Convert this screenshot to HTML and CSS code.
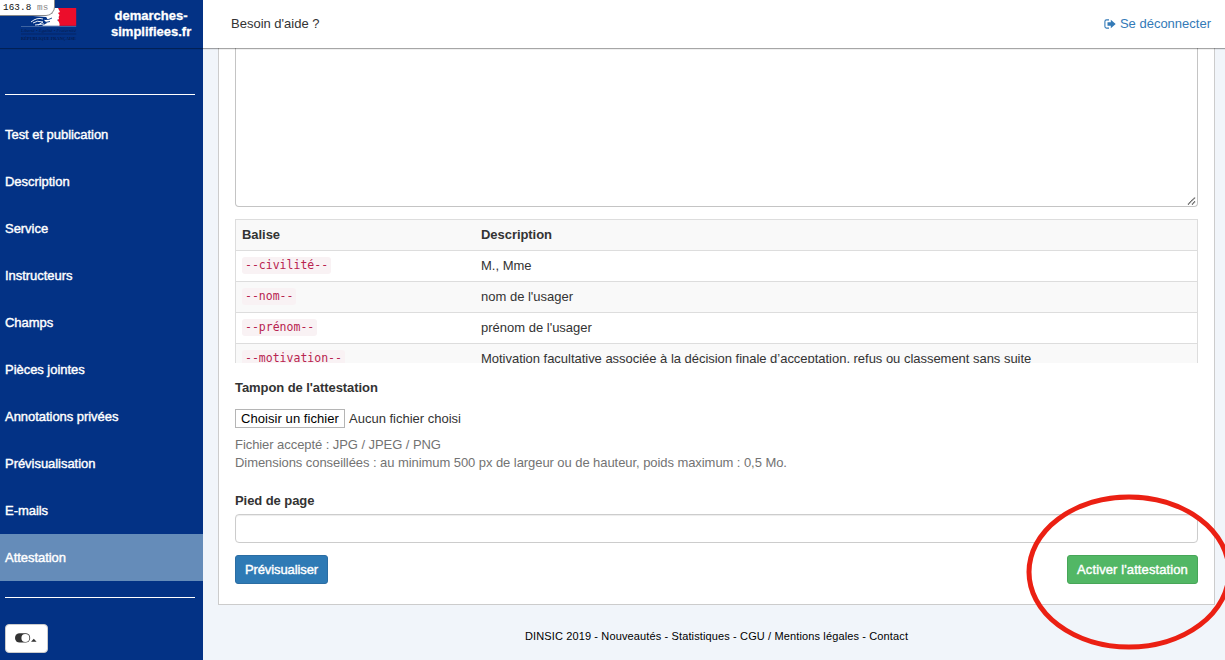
FILE: index.html
```html
<!DOCTYPE html>
<html lang="fr">
<head>
<meta charset="utf-8">
<title>demarches-simplifiees.fr</title>
<link rel="stylesheet" href="styles.css">
</head>
<body>
<div class="app">
  <header class="topbar">
    <div class="brand">
      <svg class="marianne" width="57" height="34" viewBox="0 0 57 34">
        <path fill="#ec0d2b" d="M37 0H55.200V17.800H37z"/>
        <path fill="#fff" d="M12 0H37L39 4L37 5L38.500 7Q37 9 38 11L36 12Q39 14 38.500 17.800H21L26 15L23 12Q28 11 25 9L12 8z"/>
        <path fill="none" stroke="#e8eef7" stroke-width="1" d="M10 14Q16 9 22 11M12 15Q16 12 22 14L17 17M14 17L23 16"/>
        <path fill="none" stroke="#033285" stroke-width=".9" d="M24 11.500Q28 12 31 10M24 14.500L29 13.500"/>
        <path fill="none" stroke="#4c70a8" stroke-width=".8" d="M0 18.500H55.200"/>
        <text x="0" y="24.300" class="motto" textLength="55" lengthAdjust="spacingAndGlyphs">Liberté • Égalité • Fraternité</text>
        <path stroke="#061c50" stroke-width=".6" d="M0 26H55.200"/>
        <text x="0" y="31.500" class="republic" textLength="55" lengthAdjust="spacingAndGlyphs">RÉPUBLIQUE FRANÇAISE</text>
      </svg>
      <div class="brand-name">demarches-<br>simplifiees.fr</div>
    </div>
    <div class="profiler"><b>163.8</b> <span>ms</span></div>
    <nav class="topnav">
      <a class="help"><span>Besoin d'aide ?</span></a>
      <a class="logout">
        <svg width="12" height="10" viewBox="0 0 12 10"><path fill="none" stroke="#337ab7" stroke-width="1.100" d="M5 .9H2.500Q.9.900.9 2.500V7.500Q.9 9.100 2.500 9.100H5"/><path fill="#337ab7" d="M3.500 3.200H6.800V.8L11.700 5L6.800 9.200V6.800H3.500z"/></svg>
        <span>Se déconnecter</span>
      </a>
    </nav>
  </header>
  <aside class="sidebar">
    <div class="rule"></div>
    <ul class="menu">
      <li><span>Test et publication</span></li>
      <li><span>Description</span></li>
      <li><span>Service</span></li>
      <li><span>Instructeurs</span></li>
      <li><span>Champs</span></li>
      <li><span>Pièces jointes</span></li>
      <li><span>Annotations privées</span></li>
      <li><span>Prévisualisation</span></li>
      <li><span>E-mails</span></li>
      <li class="active"><span>Attestation</span></li>
    </ul>
    <div class="rule"></div>
    <button class="toggle">
      <svg width="22" height="10" viewBox="0 0 22 10"><rect y=".2" width="15.200" height="9.400" rx="4.700" fill="#333"/><circle cx="10.400" cy="4.900" r="4" fill="#fff"/><path fill="#333" d="M16 8.800L18.800 5.800L21.600 8.800z"/></svg>
    </button>
  </aside>
  <main class="main">
    <section class="panel">
      <div class="editor">
        <svg width="10" height="10" viewBox="0 0 10 10"><path fill="none" stroke="#444" stroke-width="1.200" stroke-dasharray="1.200 .4" d="M1 8.500L8 1.500M5 8.500L8 5.500"/></svg>
      </div>
      <div class="tags">
        <table>
          <tr><th>Balise</th><th>Description</th></tr>
          <tr><td><code>--civilité--</code></td><td>M., Mme</td></tr>
          <tr><td><code>--nom--</code></td><td>nom de l'usager</td></tr>
          <tr><td><code>--prénom--</code></td><td>prénom de l'usager</td></tr>
          <tr><td><code>--motivation--</code></td><td class="long">Motivation facultative associée à la décision finale d’acceptation, refus ou classement sans suite</td></tr>
        </table>
      </div>
      <h4 class="label stamp">Tampon de l'attestation</h4>
      <div class="file"><button>Choisir un fichier</button><span>Aucun fichier choisi</span></div>
      <p class="hint">Fichier accepté : JPG / JPEG / PNG<br><span>Dimensions conseillées : au minimum 500 px de largeur ou de hauteur, poids maximum : 0,5 Mo.</span></p>
      <h4 class="label foot">Pied de page</h4>
      <input class="field" type="text">
      <div class="actions">
        <button class="btn primary">Prévisualiser</button>
        <button class="btn success">Activer l'attestation</button>
      </div>
    </section>
    <footer class="footer"><span>DINSIC 2019 - Nouveautés - Statistiques - CGU / Mentions légales - Contact</span></footer>
  </main>
  <svg class="highlight" width="205" height="160" viewBox="0 0 205 160"><ellipse cx="104" cy="80" rx="100" ry="75" fill="none" stroke="#eb2013" stroke-width="5"/></svg>
</div>
</body>
</html>
```

FILE: styles.css
```css
* { box-sizing: border-box; }
body {
  margin: 0;
  font: 13px/18px "Liberation Sans", Arial, sans-serif;
  color: #333;
}
.app {
  position: relative;
  display: grid;
  grid-template: 48px 612px / 203px 1fr;
  width: 1225px;
  height: 660px;
  overflow: hidden;
  background: #f1f5fa;
}
.topbar {
  grid-column: 1 / -1;
  position: relative;
  z-index: 2;
  display: flex;
  background: #fff;
  box-shadow: 0 1px 1px rgba(0, 0, 0, .35);
}
.brand {
  display: flex;
  width: 203px;
  padding: 8px 12px 0 21px;
  justify-content: space-between;
  background: #033285;
}
.marianne { flex: none; overflow: visible; }
.motto { font: italic 5px "Liberation Serif", serif; fill: #061c50; }
.republic { font: bold 5px "Liberation Serif", serif; fill: #061c50; }
.brand-name {
  width: 80px;
  color: #fff;
  font-weight: bold;
  font-size: 13px;
  line-height: 16px;
  text-align: center;
  white-space: nowrap;
  -webkit-text-stroke: .3px #fff;
}
.profiler {
  position: absolute;
  left: 0;
  top: 0;
  width: 55px;
  height: 16px;
  padding-left: 3px;
  border: solid #888;
  border-width: 0 1px 1px 0;
  border-radius: 0 0 9px 0;
  background: #fff;
  font: 9.300px/15px "Liberation Mono", monospace;
  letter-spacing: .1px;
  color: #888;
  white-space: nowrap;
}
.profiler b { font-weight: normal; color: #111; }
.topnav {
  flex: 1;
  display: flex;
  align-items: center;
  justify-content: space-between;
  padding: 0 14px 0 28px;
}
.logout { display: flex; align-items: center; gap: 4px; color: #337ab7; }
.logout svg { margin-top: -1px; }
.sidebar { padding-top: 46px; background: #033285; }
.rule { height: 1px; margin: 0 8px 0 5px; background: #fff; }
.menu { list-style: none; margin: 16px 0; padding: 0; }
.menu li {
  height: 47px;
  padding-left: 5px;
  line-height: 47px;
  letter-spacing: -.04px;
  color: #fff;
  -webkit-text-stroke: .4px #fff;
}
.menu .active { background: #658cb9; }
.toggle {
  display: flex;
  align-items: center;
  width: 43px;
  height: 29px;
  margin: 26px 0 0 5px;
  padding: 0 0 2px 9px;
  border: 1px solid #ccc;
  border-radius: 4px;
  background: #fff;
}
.main { padding: 0 10px 0 15px; }
.panel {
  height: 557px;
  padding: 0 16px;
  border: solid #ccc;
  border-width: 0 1px 1px;
  background: #fff;
}
.editor {
  display: flex;
  align-items: flex-end;
  justify-content: flex-end;
  height: 159px;
  border: solid #c4c4c4;
  border-width: 0 1px 1px;
  border-radius: 0 0 4px 4px;
}
.tags { height: 144px; margin-top: 12px; overflow: hidden; }
table { width: 100%; border-spacing: 0; border: 1px solid #ddd; }
tr { height: 31px; }
tr:nth-child(odd) { background: #f9f9f9; }
th, td { padding: 0 6px; border-bottom: 1px solid #ddd; text-align: left; }
th:first-child, td:first-child { width: 239px; }
th { letter-spacing: -.05px; }
.long { letter-spacing: -.026px; }
code {
  display: block;
  width: max-content;
  height: 17px;
  margin-top: -1px;
  padding: 0 3px;
  border-radius: 3px;
  background: #f9f2f4;
  color: #b8234f;
  font: 11.500px/16px "DejaVu Sans Mono", monospace;
}
.label { margin: 0; font-size: 13px; letter-spacing: -.07px; }
.stamp { margin-top: 16px; }
.file { display: flex; align-items: center; gap: 4px; height: 19px; margin-top: 12px; }
.file button {
  width: 110px;
  height: 19px;
  padding: 0;
  border: 1px solid #b5b5b5;
  background: #fff;
  font: 13px/16px "Liberation Sans", Arial, sans-serif;
  letter-spacing: .06px;
  color: #000;
}
.hint { margin: 8px 0 0; color: #737373; letter-spacing: -.065px; }
.foot { margin-top: 20px; }
.field {
  display: block;
  width: 100%;
  height: 29px;
  margin-top: 4px;
  border: 1px solid #ccc;
  border-radius: 4px;
  box-shadow: inset 0 1px 1px rgba(0, 0, 0, .075);
}
.actions { display: flex; justify-content: space-between; margin-top: 12px; }
.btn {
  height: 29px;
  padding: 0;
  border: 1px solid;
  border-radius: 3px;
  color: #fff;
  font: 13px "Liberation Sans", Arial, sans-serif;
  -webkit-text-stroke: .4px #fff;
}
.primary { width: 93px; letter-spacing: -.1px; background: #2e7ab5; border-color: #2b6da3; }
.success { width: 131px; letter-spacing: .1px; background: #52b765; border-color: #47a658; }
.footer { padding-top: 22px; font-size: 11px; letter-spacing: .13px; color: #000; text-align: center; }
.highlight { position: absolute; left: 1025px; top: 492px; z-index: 3; }
```
